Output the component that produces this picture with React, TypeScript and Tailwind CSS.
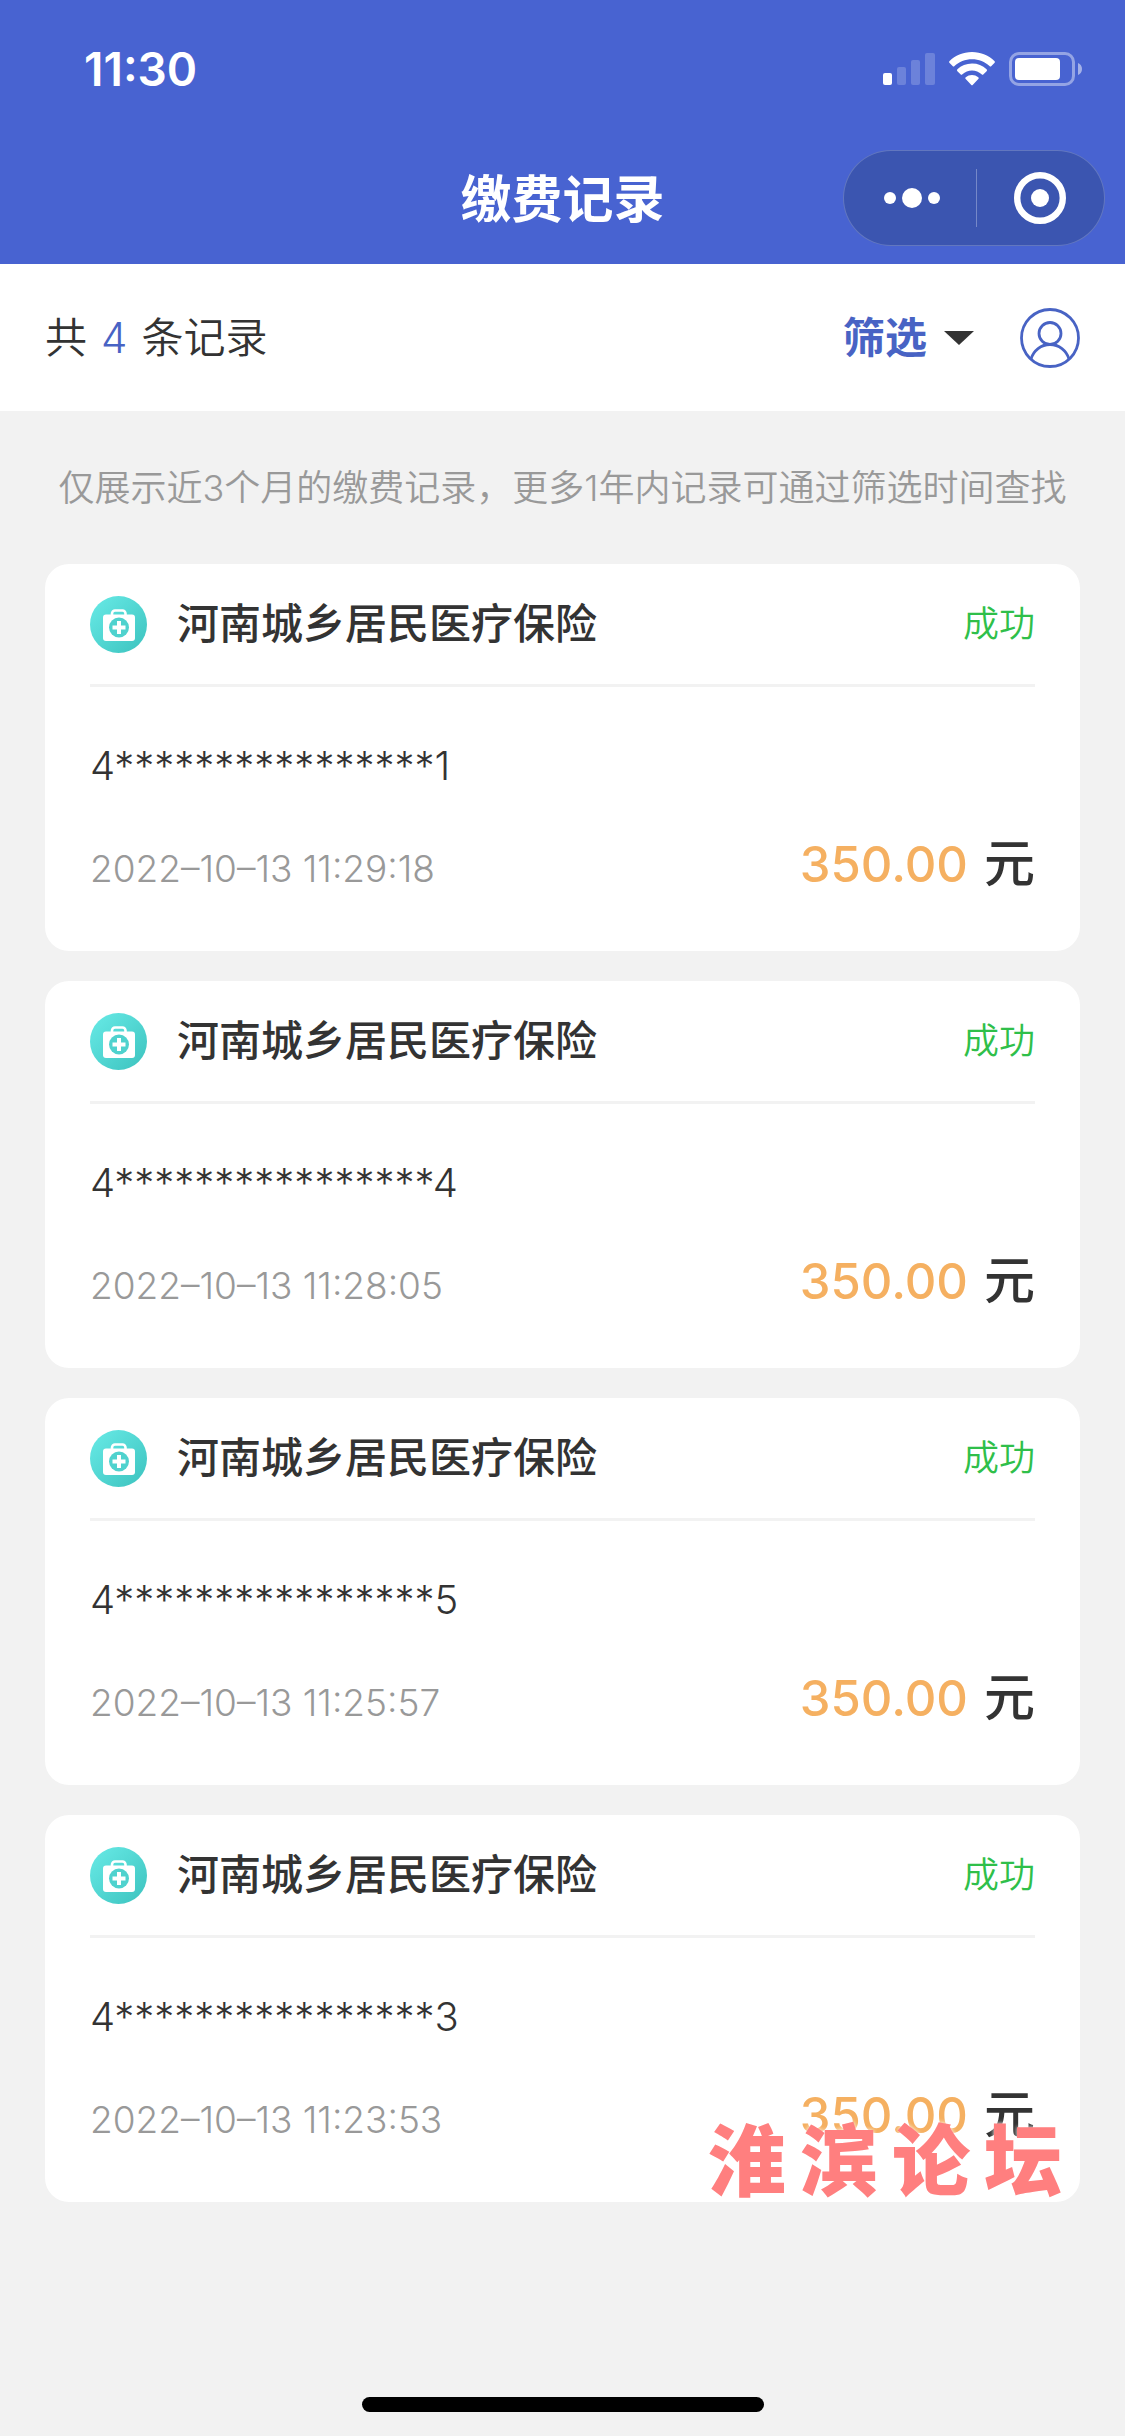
import { useState } from 'react';

interface PaymentRecord {
  id: string;
  title: string;
  status: string;
  account: string;
  paidAt: string;
  amount: string;
}

const records: PaymentRecord[] = [
  { id: '1', title: '河南城乡居民医疗保险', status: '成功', account: '4****************1', paidAt: '2022–10–13 11:29:18', amount: '350.00' },
  { id: '2', title: '河南城乡居民医疗保险', status: '成功', account: '4****************4', paidAt: '2022–10–13 11:28:05', amount: '350.00' },
  { id: '3', title: '河南城乡居民医疗保险', status: '成功', account: '4****************5', paidAt: '2022–10–13 11:25:57', amount: '350.00' },
  { id: '4', title: '河南城乡居民医疗保险', status: '成功', account: '4****************3', paidAt: '2022–10–13 11:23:53', amount: '350.00' },
];

function SignalIcon() {
  return (
    <svg className="w-[52px] h-[34px]" viewBox="0 0 52 34" fill="#fff">
      <rect x="0" y="21" width="9" height="12" rx="2" />
      <rect x="14" y="15" width="9" height="18" rx="2" opacity="0.2" />
      <rect x="28" y="8" width="9" height="25" rx="2" opacity="0.2" />
      <rect x="42" y="1" width="10" height="32" rx="2" opacity="0.2" />
    </svg>
  );
}

function WifiIcon() {
  return (
    <svg className="w-[46px] h-[34px]" viewBox="0 0 46 34" fill="#fff">
      <path d="M23 0C14 0 6 3.500 0.600 9.100a1.300 1.300 0 0 0 0 1.900l3 3a1.300 1.300 0 0 0 1.900 0C10 9.700 16.200 7.200 23 7.200s13 2.500 17.500 6.800a1.300 1.300 0 0 0 1.900 0l3-3a1.300 1.300 0 0 0 0-1.900C40 3.500 32 0 23 0z" />
      <path d="M23 11.500c-5.700 0-10.800 2.200-14.600 5.800a1.300 1.300 0 0 0 0 1.900l3.100 3.100a1.300 1.300 0 0 0 1.900 0 14 14 0 0 1 19.200 0 1.300 1.300 0 0 0 1.900 0l3.100-3.100a1.300 1.300 0 0 0 0-1.900A21 21 0 0 0 23 11.500z" />
      <path d="M23 23a10 10 0 0 0-6.300 2.300 1.200 1.200 0 0 0 0 1.800l5.400 5.600a1.200 1.200 0 0 0 1.800 0l5.400-5.600a1.200 1.200 0 0 0 0-1.800A10 10 0 0 0 23 23z" />
    </svg>
  );
}

function BatteryIcon() {
  return (
    <svg className="w-[74px] h-[34px]" viewBox="0 0 74 34" fill="none">
      <rect x="1.500" y="1.500" width="63" height="31" rx="8.500" stroke="#fff" strokeOpacity="0.42" strokeWidth="3" />
      <rect x="6" y="6" width="45" height="22" rx="4" fill="#fff" />
      <path d="M69 11c2.500 1 4 3.300 4 6s-1.500 5-4 6z" fill="#fff" fillOpacity="0.5" />
    </svg>
  );
}

function MedicalIcon() {
  return (
    <svg className="w-[57px] h-[57px] shrink-0" viewBox="0 0 57 57" fill="none">
      <defs>
        <linearGradient id="medical" x1="8" y1="8" x2="49" y2="49" gradientUnits="userSpaceOnUse">
          <stop stopColor="#62e5e1" />
          <stop offset="1" stopColor="#42c8c4" />
        </linearGradient>
      </defs>
      <circle cx="28.500" cy="28.500" r="28.500" fill="url(#medical)" />
      <path d="M22 19v-1.500a3 3 0 0 1 3-3h7.500a3 3 0 0 1 3 3V19" stroke="#fff" strokeWidth="2.600" />
      <rect x="13" y="18.500" width="32" height="26.500" rx="3" fill="#fff" />
      <circle cx="29" cy="31.500" r="10" fill="#4fd2ce" />
      <path d="M29 25v13M22.500 31.500h13" stroke="#fff" strokeWidth="4" />
    </svg>
  );
}

function UserIcon() {
  return (
    <svg className="w-[60px] h-[60px]" viewBox="0 0 60 60" fill="none" stroke="#4863c4" strokeWidth="2.800">
      <circle cx="30" cy="30" r="28.500" />
      <circle cx="30" cy="25.500" r="11" />
      <path d="M11 51C13.500 42.500 21 36.500 30 36.500S46.500 42.500 49 51" />
    </svg>
  );
}

function RecordCard({ record }: { record: PaymentRecord }) {
  return (
    <li className="bg-white rounded-3xl px-[45px]">
      <div className="flex items-center h-[123px] border-b-3 border-[#f2f2f2]">
        <MedicalIcon />
        <h2 className="ml-[30px] text-[42px] leading-[60px] font-medium">{record.title}</h2>
        <span className="ml-auto text-[36px] leading-[54px] font-[350] text-[#2fbf4a]">{record.status}</span>
      </div>
      <div className="pt-[52px] pb-[52px]">
        <p className="text-[40px] leading-[54px] font-[350]">{record.account}</p>
        <div className="flex items-baseline justify-between mt-[41px] leading-[60px]">
          <time className="text-[37px] font-[350] text-[#999999]">{record.paidAt}</time>
          <p className="flex items-baseline gap-4 font-medium">
            <span className="text-[49px] text-[#f5b061]">{record.amount}</span>
            <span className="text-[51px]">元</span>
          </p>
        </div>
      </div>
    </li>
  );
}

export default function App() {
  const [filterOpen, setFilterOpen] = useState(false);

  return (
    <div className="flex flex-col min-h-screen bg-[#f2f2f2] text-[#333333] font-['Inter','Noto_Sans_CJK_SC',sans-serif]">
      <header className="bg-[#4863d1] text-white">
        {/* 状态栏 */}
        <div className="flex items-center justify-between h-[138px] pl-[84px] pr-[42px]">
          <span className="text-[46px] leading-[54px] font-semibold">11:30</span>
          <div className="flex items-center gap-[14px]">
            <SignalIcon />
            <WifiIcon />
            <BatteryIcon />
          </div>
        </div>

        {/* 导航栏 */}
        <div className="grid grid-cols-[1fr_auto_1fr] items-center h-[126px] px-5 pb-[6px]">
          <h1 className="col-start-2 pt-1 text-[51px] leading-[72px] font-bold">缴费记录</h1>
          <div className="justify-self-end flex items-center w-[262px] h-24 pl-1 rounded-full border border-white/20 bg-[#3b55b0]">
            <button type="button" aria-label="更多" className="flex-1 flex justify-center">
              <svg className="w-14 h-5" viewBox="0 0 56 20" fill="#fff">
                <circle cx="6" cy="10" r="6" />
                <circle cx="28" cy="10" r="10" />
                <circle cx="50" cy="10" r="6" />
              </svg>
            </button>
            <span className="w-px h-[58px] bg-white/30" />
            <button type="button" aria-label="关闭" className="flex-1 flex justify-center">
              <svg className="w-[52px] h-[52px]" viewBox="0 0 52 52" fill="none">
                <circle cx="26" cy="26" r="22.800" stroke="#fff" strokeWidth="6.400" />
                <circle cx="26" cy="26" r="9" fill="#fff" />
              </svg>
            </button>
          </div>
        </div>
      </header>

      {/* 统计与筛选 */}
      <div className="flex items-center justify-between h-[147px] px-[45px] bg-white text-[42px] leading-[60px]">
        <p className="flex gap-[14px] font-[350]">
          <span>共</span>
          <span className="text-[#4863c4]">4</span>
          <span>条记录</span>
        </p>
        <div className="flex items-center gap-[46px]">
          <button
            type="button"
            aria-expanded={filterOpen}
            onClick={() => setFilterOpen(!filterOpen)}
            className="flex items-center gap-[17px] font-bold text-[#4863c4]"
          >
            筛选
            <svg className="w-[30px] h-[14px]" viewBox="0 0 30 14" fill="#333">
              <path d="M0 0h30L15 14z" />
            </svg>
          </button>
          <button type="button" aria-label="个人中心">
            <UserIcon />
          </button>
        </div>
      </div>

      <main className="px-[45px]">
        <p className="flex items-center justify-center h-[153px] text-[36px] leading-[54px] font-[350] text-[#999999] whitespace-nowrap">
          仅展示近3个月的缴费记录，更多1年内记录可通过筛选时间查找
        </p>

        <div className="relative">
          <ul className="flex flex-col gap-[30px]">
            {records.map((record) => (
              <RecordCard key={record.id} record={record} />
            ))}
          </ul>

          {/* 水印 */}
          <div className="absolute right-[18px] -bottom-2 flex gap-[14px] text-[78px] leading-[96px] font-black text-[#ff7f7f] [text-shadow:0_0_4px_#fff] pointer-events-none">
            <span>淮</span>
            <span>滨</span>
            <span>论</span>
            <span>坛</span>
          </div>
        </div>
      </main>

      <div className="mt-auto mx-auto mb-6 w-[402px] h-[15px] rounded-full bg-black" />
    </div>
  );
}
